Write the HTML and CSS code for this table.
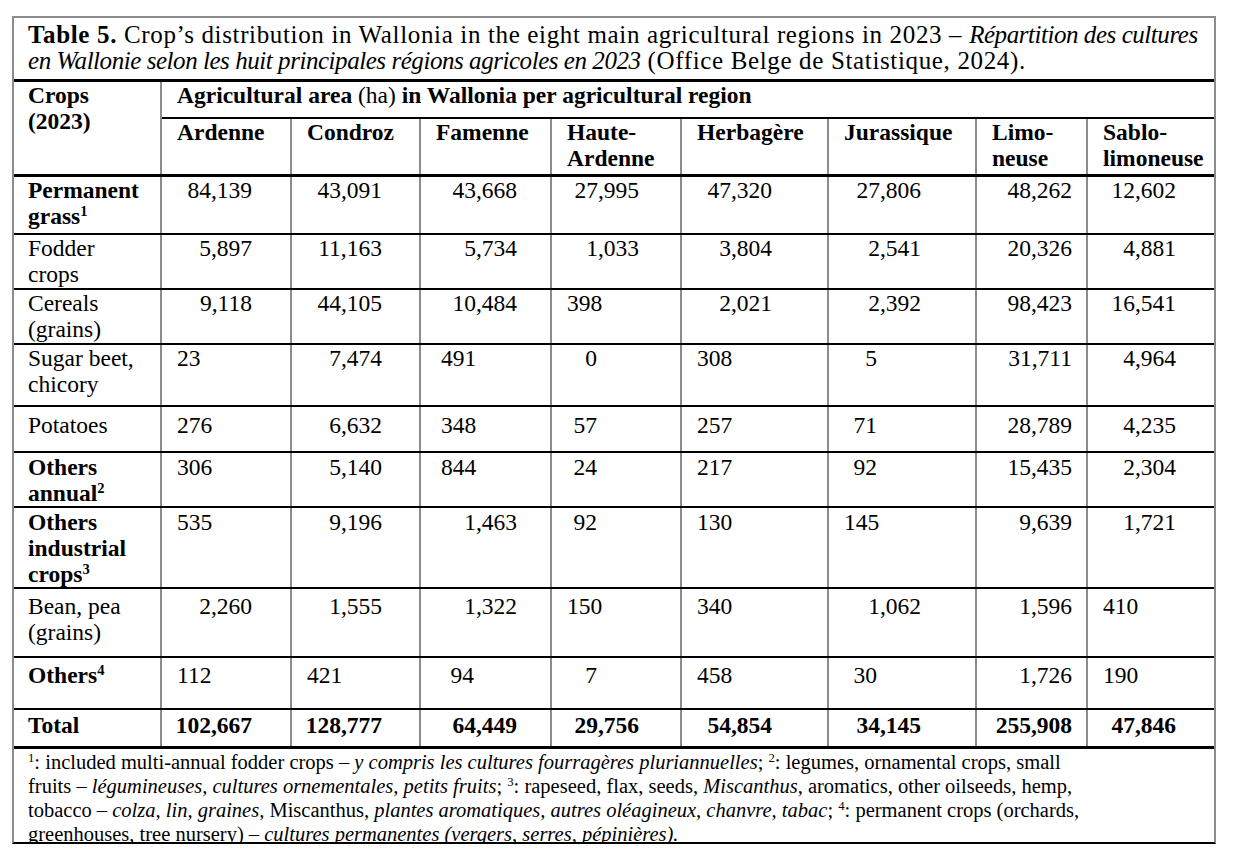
FILE: index.html
```html
<!DOCTYPE html>
<html lang="en">
<head>
<meta charset="utf-8">
<title>Table 5</title>
<link rel="stylesheet" href="styles.css">
</head>
<body>
<div class="sheet">
  <div class="title"><b>Table 5.</b> Crop’s distribution in Wallonia in the eight main agricultural regions in 2023 – <i>Répartition des cultures</i><br><i>en Wallonie selon les huit principales régions agricoles en 2023</i> (Office Belge de Statistique, 2024).</div>
  <table class="data">
    <colgroup>
      <col class="c1"><col class="c2"><col class="c3"><col class="c4"><col class="c5"><col class="c6"><col class="c7"><col class="c8"><col class="c9">
    </colgroup>
    <tr class="h1">
      <th class="lab" rowspan="2">Crops<br>(2023)</th>
      <th class="span" colspan="8">Agricultural area <span class="nb">(ha)</span> in Wallonia per agricultural region</th>
    </tr>
    <tr class="h2">
      <th>Ardenne</th><th>Condroz</th><th>Famenne</th><th>Haute-<br>Ardenne</th><th>Herbagère</th><th>Jurassique</th><th>Limo-<br>neuse</th><th>Sablo-<br>limoneuse</th>
    </tr>
    <tr class="r-perm">
      <td class="lab b">Permanent<br>grass<sup>1</sup></td>
      <td class="n">84,139</td><td class="n">43,091</td><td class="n">43,668</td><td class="n">27,995</td><td class="n">47,320</td><td class="n">27,806</td><td class="n">48,262</td><td class="n">12,602</td>
    </tr>
    <tr class="r-fod">
      <td class="lab">Fodder<br>crops</td>
      <td class="n">5,897</td><td class="n">11,163</td><td class="n">5,734</td><td class="n">1,033</td><td class="n">3,804</td><td class="n">2,541</td><td class="n">20,326</td><td class="n">4,881</td>
    </tr>
    <tr class="r-cer">
      <td class="lab">Cereals<br>(grains)</td>
      <td class="n">9,118</td><td class="n">44,105</td><td class="n">10,484</td><td class="l">398</td><td class="n">2,021</td><td class="n">2,392</td><td class="n">98,423</td><td class="n">16,541</td>
    </tr>
    <tr class="r-sug">
      <td class="lab">Sugar beet,<br>chicory</td>
      <td class="l">23</td><td class="n">7,474</td><td class="l">491</td><td class="s">0</td><td class="l">308</td><td class="s">5</td><td class="n">31,711</td><td class="n">4,964</td>
    </tr>
    <tr class="r-pot">
      <td class="lab">Potatoes</td>
      <td class="l">276</td><td class="n">6,632</td><td class="l">348</td><td class="s">57</td><td class="l">257</td><td class="s">71</td><td class="n">28,789</td><td class="n">4,235</td>
    </tr>
    <tr class="r-ann">
      <td class="lab b">Others<br>annual<sup>2</sup></td>
      <td class="l">306</td><td class="n">5,140</td><td class="l">844</td><td class="s">24</td><td class="l">217</td><td class="s">92</td><td class="n">15,435</td><td class="n">2,304</td>
    </tr>
    <tr class="r-ind">
      <td class="lab b">Others<br>industrial<br>crops<sup>3</sup></td>
      <td class="l">535</td><td class="n">9,196</td><td class="n">1,463</td><td class="s">92</td><td class="l">130</td><td class="l">145</td><td class="n">9,639</td><td class="n">1,721</td>
    </tr>
    <tr class="r-bean">
      <td class="lab">Bean, pea<br>(grains)</td>
      <td class="n">2,260</td><td class="n">1,555</td><td class="n">1,322</td><td class="l">150</td><td class="l">340</td><td class="n">1,062</td><td class="n">1,596</td><td class="l">410</td>
    </tr>
    <tr class="r-oth">
      <td class="lab b">Others<sup>4</sup></td>
      <td class="l">112</td><td class="l">421</td><td class="s">94</td><td class="s">7</td><td class="l">458</td><td class="s">30</td><td class="n">1,726</td><td class="l">190</td>
    </tr>
    <tr class="r-tot">
      <td class="lab b">Total</td>
      <td class="n b">102,667</td><td class="n b">128,777</td><td class="n b">64,449</td><td class="n b">29,756</td><td class="n b">54,854</td><td class="n b">34,145</td><td class="n b">255,908</td><td class="n b">47,846</td>
    </tr>
  </table>
  <div class="notes"><sup>1</sup>: included multi-annual fodder crops – <i>y compris les cultures fourragères pluriannuelles</i>; <sup>2</sup>: legumes, ornamental crops, small<br>fruits – <i>légumineuses, cultures ornementales, petits fruits</i>; <sup>3</sup>: rapeseed, flax, seeds, <i>Miscanthus</i>, aromatics, other oilseeds, hemp,<br>tobacco – <i>colza, lin, graines,</i> Miscanthus<i>, plantes aromatiques, autres oléagineux, chanvre, tabac</i>; <sup>4</sup>: permanent crops (orchards,<br>greenhouses, tree nursery) – <i>cultures permanentes (vergers, serres, pépinières).</i></div>
</div>
</body>
</html>
```

FILE: styles.css
```css
html, body {
  margin: 0;
  padding: 0;
  background: #ffffff;
}

body {
  font-family: "Liberation Serif", "Times New Roman", serif;
  color: #000;
}

.sheet {
  margin: 16px 0 0 12px;
  width: 1200px;
  border-top: 2px solid #8c8c8c;
  border-left: 2px solid #8c8c8c;
  border-right: 2px solid #8c8c8c;
  border-bottom: 2px solid #000;
}

.title {
  font-size: 25px;
  line-height: 26px;
  letter-spacing: 0.65px;
  padding: 4px 0 5px 14px;
  border-bottom: 3px solid #000;
  white-space: nowrap;
}

.title i {
  letter-spacing: -0.45px;
}

.data {
  width: 1200px;
  border-collapse: collapse;
  table-layout: fixed;
  font-size: 23.5px;
  line-height: 26px;
}

.c1 { width: 147px; }
.c2 { width: 130px; }
.c3 { width: 129px; }
.c4 { width: 131px; }
.c5 { width: 130px; }
.c6 { width: 147px; }
.c7 { width: 148px; }
.c8 { width: 111px; }
.c9 { width: 127px; }

.data th,
.data td {
  vertical-align: top;
  border-left: 2px solid #8c8c8c;
  border-right: 2px solid #8c8c8c;
  border-top: 2px solid #000;
  border-bottom: 2px solid #000;
  padding: 0 4px 0 15px;
  text-align: left;
  white-space: nowrap;
  overflow: hidden;
}

.data th { font-weight: bold; }
.data tr > :first-child { border-left: none; }
.data tr > :last-child { border-right: none; }
.data tr.h1 > * { border-top: none; }
.data tr.h2 > * { border-bottom: 3px solid #000; }
.data tr.h1 th.lab { border-bottom: 3px solid #000; }
.data tr.r-tot > * { border-bottom: none; }

.nb { font-weight: normal; }
.b { font-weight: bold; }

.data .lab { padding-left: 14px; }

sup {
  font-size: 0.62em;
  line-height: 0;
  vertical-align: 0.55em;
}

tr.h1 { height: 36px; }
tr.h2 { height: 57px; }
tr.r-perm { height: 59px; }
tr.r-fod { height: 55px; }
tr.r-cer { height: 55px; }
tr.r-sug { height: 62px; }
tr.r-pot { height: 46px; }
tr.r-ann { height: 54px; }
tr.r-ind { height: 79px; }
tr.r-bean { height: 69px; }
tr.r-oth { height: 52px; }
tr.r-tot { height: 37px; }

/* first-line offsets per row */
tr.r-pot > td { padding-top: 5px; }
tr.r-ann > td { padding-top: 1px; }
tr.r-ind > td { padding-top: 1px; }
tr.r-bean > td { padding-top: 4px; }
tr.r-oth > td { padding-top: 4px; }
tr.r-tot > td { padding-top: 2px; }

/* right-aligned numbers, tab stops per column */
.data td.n { text-align: right; padding-left: 4px; }
.data td.n:nth-child(2) { padding-right: 38px; }
.data td.n:nth-child(3) { padding-right: 37px; }
.data td.n:nth-child(4) { padding-right: 33px; }
.data td.n:nth-child(5) { padding-right: 41px; }
.data td.n:nth-child(6) { padding-right: 55px; }
.data td.n:nth-child(7) { padding-right: 54px; }
.data td.n:nth-child(8) { padding-right: 14px; }
.data td.n:nth-child(9) { padding-right: 38px; }

/* short numbers at a secondary stop */
.data td.s { text-align: right; padding-left: 4px; }
.data td.s:nth-child(4) { padding-right: 76px; }
.data td.s:nth-child(5) { padding-right: 83px; }
.data td.s:nth-child(7) { padding-right: 98px; }

/* left-aligned numbers */
.data td.l { text-align: left; padding-left: 15px; }
.data td.l:nth-child(4) { padding-left: 20px; }

.notes {
  font-size: 20.5px;
  line-height: 24px;
  padding: 1px 0 0 14px;
  height: 96px;
  overflow: hidden;
  white-space: nowrap;
  border-top: 3px solid #000;
  box-sizing: border-box;
}
```
